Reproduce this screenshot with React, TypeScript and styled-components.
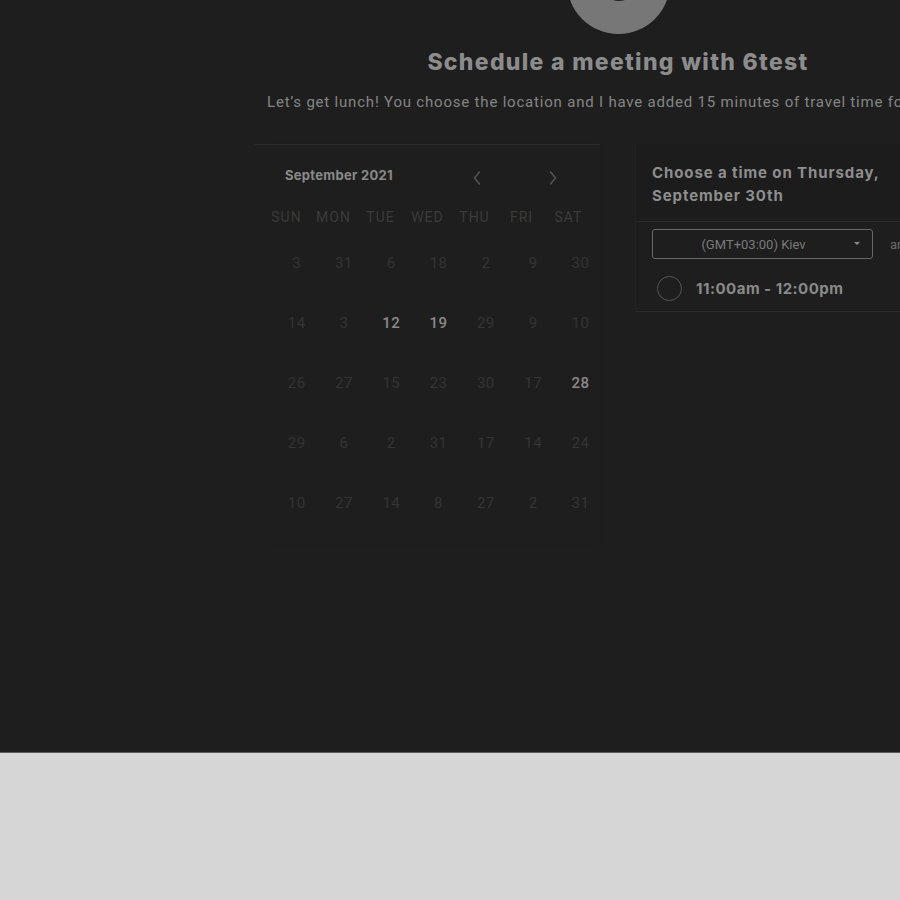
import React from "react";
import styled, { createGlobalStyle } from "styled-components";

const GlobalStyle = createGlobalStyle`
  html, body { margin: 0; padding: 0; }
  body {
    background: #d6d6d6;
    overflow: hidden;
    font-family: Roboto, "Liberation Sans", sans-serif;
  }
`;

const Page = styled.div`
  height: 752px;
  background: #1e1e1e;
  border-bottom: 1px solid #5a5a5a;
  overflow: hidden;
`;

const Column = styled.div`
  margin-left: 255px;
  width: 726px;
  display: flex;
  flex-direction: column;
  align-items: stretch;
`;

const Avatar = styled.div`
  align-self: center;
  width: 103px;
  height: 103px;
  margin-top: -69px;
  border-radius: 50%;
  background: #777777;
  display: flex;
  align-items: center;
  justify-content: center;
  color: #1e1e1e;
  font-family: Inter, sans-serif;
  font-weight: 800;
  font-size: 50px;
  line-height: 1;
`;

const Title = styled.h1`
  margin: 14px 0 0;
  text-align: center;
  font-family: Inter, "Liberation Sans", sans-serif;
  font-weight: 800;
  font-size: 23px;
  letter-spacing: 1.3px;
  line-height: 28px;
  color: #8c8c8c;
`;

const Subtitle = styled.p`
  margin: 16px 0 0 12px;
  white-space: nowrap;
  font-family: Roboto, "Liberation Sans", sans-serif;
  font-size: 15px;
  letter-spacing: 0.8px;
  line-height: 20px;
  color: #858585;
`;

const Panels = styled.div`
  margin-top: 32px;
  display: flex;
  gap: 35px;
  align-items: flex-start;
`;

const Calendar = styled.div`
  flex: 0 0 345px;
  min-width: 0;
  border-top: 1px solid #2b2b2b;
  box-shadow: 6px 0 10px -9px rgba(0, 0, 0, 0.25);
  padding-bottom: 12px;
`;

const MonthHeader = styled.div`
  display: flex;
  align-items: center;
  height: 16px;
  padding: 22px 0 0 30px;
`;

const MonthLabel = styled.div`
  flex: 0 0 187px;
  font-family: Inter, "Liberation Sans", sans-serif;
  font-weight: 700;
  font-size: 13px;
  letter-spacing: 0.3px;
  color: #8a8a8a;
`;

const NavGroup = styled.div`
  display: flex;
  gap: 66px;
  margin-top: 6px;
  flex-shrink: 0;
`;

const NavButton = styled.div`
  width: 10px;
  height: 16px;
  display: flex;
  align-items: center;
  justify-content: center;
`;

const WeekRow = styled.div`
  display: grid;
  grid-template-columns: repeat(7, 47px);
  margin: 26px 0 0 8px;
`;

const WeekDay = styled.div`
  text-align: center;
  font-family: Roboto, "Liberation Sans", sans-serif;
  font-size: 14px;
  letter-spacing: 1px;
  line-height: 16px;
  color: #3b3b3b;
`;

const DateGrid = styled.div`
  display: grid;
  grid-template-columns: repeat(7, 47.3px);
  grid-auto-rows: 60px;
  margin: 0 0 0 18px;
  padding-top: 8px;
`;

const DateCell = styled.div<{ $active?: boolean }>`
  display: flex;
  align-items: center;
  justify-content: center;
  font-family: Roboto, "Liberation Sans", sans-serif;
  font-size: 15px;
  letter-spacing: 0.4px;
  font-weight: ${(p) => (p.$active ? 500 : 400)};
  color: ${(p) => (p.$active ? "#8a8a8a" : "#343434")};
`;

const TimePanel = styled.div`
  flex: 0 0 346px;
  min-width: 0;
  border-left: 1px solid #232323;
`;

const TimeHeader = styled.div`
  padding: 17px 16px 14px 16px;
  border-bottom: 1px solid #2a2a2a;
  font-family: Inter, "Liberation Sans", sans-serif;
  font-weight: 700;
  font-size: 15px;
  letter-spacing: 0.9px;
  line-height: 23px;
  color: #8e8e8e;
  background: #1c1c1c;
`;

const ZoneRow = styled.div`
  display: flex;
  align-items: center;
  gap: 17px;
  margin: 7px 0 0 16px;
`;

const ZoneSelect = styled.div`
  position: relative;
  box-sizing: border-box;
  flex: 0 0 221px;
  height: 30px;
  border: 1px solid #686868;
  border-radius: 3px;
  display: flex;
  align-items: center;
  justify-content: center;
  padding-right: 18px;
  font-family: Roboto, "Liberation Sans", sans-serif;
  font-size: 13px;
  color: #7a7a7a;
`;

const Caret = styled.span`
  position: absolute;
  right: 12px;
  top: 12px;
  width: 0;
  height: 0;
  border-left: 3px solid transparent;
  border-right: 3px solid transparent;
  border-top: 3px solid #8a8a8a;
`;

const ZoneAside = styled.span`
  font-family: Roboto, "Liberation Sans", sans-serif;
  font-size: 13px;
  color: #6a6a6a;
  white-space: nowrap;
`;

const SlotRow = styled.div`
  display: flex;
  align-items: center;
  gap: 14px;
  height: 46px;
  margin-top: 6px;
  padding-left: 21px;
  border-bottom: 1px solid #2c2c2c;
`;

const Radio = styled.div`
  box-sizing: border-box;
  width: 25px;
  height: 25px;
  border-radius: 50%;
  border: 1.5px solid #555555;
`;

const SlotLabel = styled.span`
  font-family: Inter, "Liberation Sans", sans-serif;
  font-weight: 700;
  font-size: 15px;
  letter-spacing: 0.5px;
  color: #8a8a8a;
`;

const Chevron = ({ dir }: { dir: "left" | "right" }) => (
  <svg width="10" height="16" viewBox="0 0 10 16" fill="none">
    <path
      d={dir === "left" ? "M7.5 2 L2.5 8 L7.5 14" : "M2.5 2 L7.5 8 L2.5 14"}
      stroke="#565656"
      strokeWidth="1.4"
      strokeLinecap="round"
      strokeLinejoin="round"
    />
  </svg>
);

const weekdays = ["SUN", "MON", "TUE", "WED", "THU", "FRI", "SAT"];
const dates: number[][] = [
  [3, 31, 6, 18, 2, 9, 30],
  [14, 3, 12, 19, 29, 9, 10],
  [26, 27, 15, 23, 30, 17, 28],
  [29, 6, 2, 31, 17, 14, 24],
  [10, 27, 14, 8, 27, 2, 31],
];
const active = new Set(["1-2", "1-3", "2-6"]);

export default function App() {
  return (
    <>
      <GlobalStyle />
      <Page>
        <Column>
          <Avatar>6</Avatar>
          <Title>Schedule a meeting with 6test</Title>
          <Subtitle>
            Let’s get lunch! You choose the location and I have added 15 minutes of travel time for you.
          </Subtitle>
          <Panels>
            <Calendar>
              <MonthHeader>
                <MonthLabel>September 2021</MonthLabel>
                <NavGroup>
                  <NavButton>
                    <Chevron dir="left" />
                  </NavButton>
                  <NavButton>
                    <Chevron dir="right" />
                  </NavButton>
                </NavGroup>
              </MonthHeader>
              <WeekRow>
                {weekdays.map((d) => (
                  <WeekDay key={d}>{d}</WeekDay>
                ))}
              </WeekRow>
              <DateGrid>
                {dates.map((row, r) =>
                  row.map((n, c) => (
                    <DateCell key={`${r}-${c}`} $active={active.has(`${r}-${c}`)}>
                      {n}
                    </DateCell>
                  ))
                )}
              </DateGrid>
            </Calendar>
            <TimePanel>
              <TimeHeader>
                Choose a time on Thursday,
                <br />
                September 30th
              </TimeHeader>
              <ZoneRow>
                <ZoneSelect>
                  (GMT+03:00) Kiev
                  <Caret />
                </ZoneSelect>
                <ZoneAside>am/pm</ZoneAside>
              </ZoneRow>
              <SlotRow>
                <Radio />
                <SlotLabel>11:00am - 12:00pm</SlotLabel>
              </SlotRow>
            </TimePanel>
          </Panels>
        </Column>
      </Page>
    </>
  );
}
